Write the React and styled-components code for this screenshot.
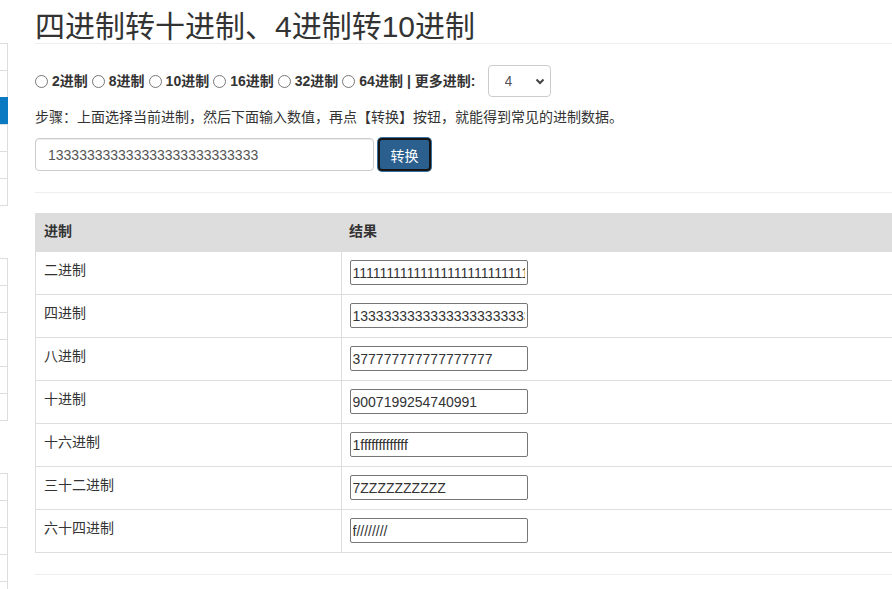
import React from "react";
import styled, { createGlobalStyle } from "styled-components";

const GlobalStyle = createGlobalStyle`
  html, body {
    margin: 0;
    padding: 0;
    background: #fff;
    overflow: hidden;
  }
  body {
    font-family: "Liberation Sans", "Noto Sans CJK SC", sans-serif;
    font-size: 14px;
    line-height: 20px;
    color: #333;
  }
`;

const Page = styled("div")`
  display: flex;
  align-items: flex-start;
  width: 1200px;
`;

const Sidebar = styled("div")`
  width: 8px;
  flex: none;
  padding-top: 43px;
  display: flex;
  flex-direction: column;
  gap: 52px;
`;

const SideGroup = styled("div")`
  display: flex;
  flex-direction: column;
  border-bottom: 1px solid #ddd;
`;

const SideItem = styled("div")`
  height: 26px;
  border-top: 1px solid ${p => (p.active ? "#0b7ac2" : "#ddd")};
  border-right: 1px solid ${p => (p.active ? "#0b7ac2" : "#ddd")};
  background: ${p => (p.active ? "#0b7ac2" : "#fff")};
`;

const Main = styled("div")`
  margin-left: 27px;
  width: 1100px;
  flex: none;
`;

const Title = styled("h1")`
  margin: 0;
  padding-top: 10px;
  font-size: 30px;
  line-height: 33px;
  font-weight: normal;
  color: #333;
  border-bottom: 1px solid #eee;
`;

const RadioRow = styled("div")`
  margin-top: 21px;
  display: flex;
  align-items: center;
  gap: 4px;
  font-weight: bold;
`;

const Radio = styled("input")`
  margin: 0;
  width: 13px;
  height: 13px;
`;

const SelectWrap = styled("div")`
  position: relative;
  width: 63px;
  height: 32px;
  margin-left: 8px;
`;

const Select = styled("select")`
  appearance: none;
  width: 100%;
  height: 100%;
  box-sizing: border-box;
  border: 1px solid #ccc;
  border-radius: 4px;
  background: #fff;
  padding: 0 0 0 16px;
  font-family: "Liberation Sans", sans-serif;
  font-size: 14px;
  color: #555;
`;

const Chevron = styled("svg")`
  position: absolute;
  right: 6px;
  top: 13px;
  pointer-events: none;
`;

const Steps = styled("p")`
  margin: 10px 0 0;
  line-height: 20px;
`;

const InputRow = styled("div")`
  margin-top: 11px;
  display: flex;
  gap: 4px;
`;

const MainInput = styled("input")`
  width: 339px;
  height: 33px;
  box-sizing: border-box;
  border: 1px solid #ccc;
  border-radius: 4px;
  padding: 0 12px;
  font-family: "Liberation Sans", sans-serif;
  font-size: 14px;
  color: #555;
  box-shadow: inset 0 1px 1px rgba(0, 0, 0, 0.075);
`;

const Button = styled("button")`
  width: 53px;
  height: 33px;
  box-sizing: border-box;
  border: 2px solid #151515;
  border-radius: 4px;
  box-shadow: 0 0 0 1px #3a6f9e;
  background: #2a5f8e;
  color: #fff;
  font-family: "Liberation Sans", "Noto Sans CJK SC", sans-serif;
  font-size: 14px;
  padding: 0;
`;

const Rule = styled("hr")`
  margin: 21px 0 20px;
  border: 0;
  border-top: 1px solid #eee;
`;

const Table = styled("table")`
  width: 100%;
  border-collapse: collapse;
  border-left: 1px solid #ddd;
`;

const Th = styled("th")`
  text-align: left;
  font-weight: bold;
  background: #ddd;
  padding: 8px 8px 9px;
  border-bottom: 2px solid #ddd;
  width: ${p => (p.first ? "289px" : "auto")};
`;

const Td = styled("td")`
  padding: 8px 8px 9px;
  vertical-align: top;
  border-bottom: 1px solid #ddd;
  border-left: ${p => (p.divider ? "1px solid #ddd" : "none")};
  line-height: 20px;
`;

const CellInput = styled("input")`
  display: block;
  width: 178px;
  height: 25px;
  box-sizing: border-box;
  border: 1px solid #767676;
  border-radius: 2px;
  padding: 0 2px;
  font-family: "Liberation Sans", sans-serif;
  font-size: 14px;
  color: #333;
`;

const bases = ["2", "8", "10", "16", "32", "64"];

const rows = [
  ["二进制", "11111111111111111111111111111111111111111111111111111"],
  ["四进制", "133333333333333333333333333"],
  ["八进制", "377777777777777777"],
  ["十进制", "9007199254740991"],
  ["十六进制", "1fffffffffffff"],
  ["三十二进制", "7ZZZZZZZZZZ"],
  ["六十四进制", "f////////"],
];

const sideGroups = [
  [0, 0, 1, 0, 0, 0],
  [0, 0, 0, 0, 0, 0],
  [0, 0, 0, 0, 0],
];

export default function App() {
  return (
    <>
      <GlobalStyle />
      <Page>
        <Sidebar>
          {sideGroups.map((g, i) => (
            <SideGroup key={i}>
              {g.map((a, j) => (
                <SideItem key={j} active={a === 1} />
              ))}
            </SideGroup>
          ))}
        </Sidebar>
        <Main>
          <Title>四进制转十进制、4进制转10进制</Title>
          <RadioRow>
            {bases.map(b => (
              <React.Fragment key={b}>
                <Radio type="radio" name="base" />
                <span>{b}进制</span>
              </React.Fragment>
            ))}
            <span>|</span>
            <span>更多进制:</span>
            <SelectWrap>
              <Select defaultValue="4">
                <option value="4">4</option>
              </Select>
              <Chevron width="10" height="7" viewBox="0 0 10 7">
                <path d="M1.5 1.5 L5 5 L8.5 1.5" fill="none" stroke="#444" strokeWidth="2" />
              </Chevron>
            </SelectWrap>
          </RadioRow>
          <Steps>步骤：上面选择当前进制，然后下面输入数值，再点【转换】按钮，就能得到常见的进制数据。</Steps>
          <InputRow>
            <MainInput defaultValue="133333333333333333333333333" />
            <Button>转换</Button>
          </InputRow>
          <Rule />
          <Table>
            <thead>
              <tr>
                <Th first>进制</Th>
                <Th>结果</Th>
              </tr>
            </thead>
            <tbody>
              {rows.map(([name, val]) => (
                <tr key={name}>
                  <Td>{name}</Td>
                  <Td divider>
                    <CellInput defaultValue={val} />
                  </Td>
                </tr>
              ))}
            </tbody>
          </Table>
          <Rule />
        </Main>
      </Page>
    </>
  );
}
